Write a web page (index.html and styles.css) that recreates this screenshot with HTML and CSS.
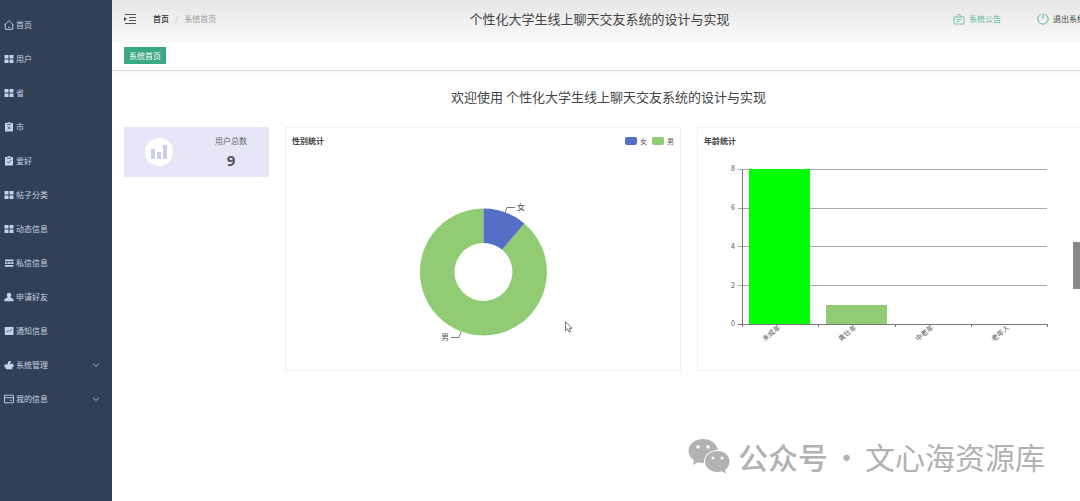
FILE: index.html
```html
<!DOCTYPE html>
<html lang="zh-CN">
<head>
<meta charset="utf-8">
<title>个性化大学生线上聊天交友系统的设计与实现</title>
<link rel="stylesheet" href="styles.css">
</head>
<body>
<svg class="defs" aria-hidden="true">
  <symbol id="grid" viewBox="0 0 10 10"><path fill="currentColor" d="M.5 1h4v3.500h-4zM5.500 1h4v3.500h-4zM.5 5.500h4V9h-4zM5.500 5.500h4V9h-4z"/></symbol>
  <symbol id="down" viewBox="0 0 8 8"><path fill="none" stroke="currentColor" stroke-width=".8" d="M1 2.500l3 3 3-3"/></symbol>
</svg>
<div class="app">
  <nav class="sidebar">
    <ul class="menu">
      <li><a class="item" href="#"><svg class="icon" viewBox="0 0 10 10"><path fill="none" stroke="currentColor" stroke-width=".9" d="M.3 5.200L5 .8l4.700 4.400M1.300 4.200V9.300h7.400V4.200M4 7.300h2"/></svg>首页</a></li>
      <li><a class="item" href="#"><svg class="icon"><use href="#grid"/></svg>用户</a></li>
      <li><a class="item" href="#"><svg class="icon"><use href="#grid"/></svg>省</a></li>
      <li><a class="item" href="#"><svg class="icon" viewBox="0 0 10 10"><path fill="currentColor" d="M1 1h2.500V.3h3V1H9v8.500H1z"/><path fill="none" stroke="#304156" stroke-width=".8" d="M3 2.300h4M3.500 4.300l3 3M6.500 4.300l-3 3"/></svg>市</a></li>
      <li><a class="item" href="#"><svg class="icon" viewBox="0 0 10 10"><path fill="currentColor" d="M1 1h2.500V.3h3V1H9v8.500H1z"/><path fill="none" stroke="#304156" stroke-width=".8" d="M3 2.300h4M3 5.500l1.500 1.500L7.300 4"/></svg>爱好</a></li>
      <li><a class="item" href="#"><svg class="icon"><use href="#grid"/></svg>帖子分类</a></li>
      <li><a class="item" href="#"><svg class="icon"><use href="#grid"/></svg>动态信息</a></li>
      <li><a class="item" href="#"><svg class="icon" viewBox="0 0 10 10"><path fill="currentColor" d="M1 1.500h8.500v1.700H1zM1 4.300h8.500V6H1zM1 7.100h8.500v1.700H1z"/><path stroke="#304156" stroke-width=".6" d="M3.300 4.300V6M6.800 4.300V6"/></svg>私信信息</a></li>
      <li><a class="item" href="#"><svg class="icon" viewBox="0 0 10 10"><path fill="currentColor" d="M5 .7a2.300 2.300 0 0 1 2.300 2.300c0 1-.5 1.800-1.100 2.200L9.500 7v2.200h-9V7l3.300-1.800C3.200 4.800 2.700 4 2.700 3A2.300 2.300 0 0 1 5 .7z"/></svg>申请好友</a></li>
      <li><a class="item" href="#"><svg class="icon" viewBox="0 0 10 10"><path fill="currentColor" d="M.8 1h8.700v8H.8z"/><path fill="none" stroke="#304156" stroke-width=".8" d="M2.500 6l1.800-1.500 1 1L8 3.300"/></svg>通知信息</a></li>
      <li><a class="item" href="#"><svg class="icon" viewBox="0 0 10 10"><path fill="currentColor" d="M.5 4.500h2.800L4 2.200C4.800.5 7 .7 7.200 2L5.800 3l.9 1.200L8.500 3v1.500h1V7H8.300v2.300H1.800V7.500H.5z"/></svg>系统管理<svg class="arrow"><use href="#down"/></svg></a></li>
      <li><a class="item" href="#"><svg class="icon" viewBox="0 0 10 10"><path fill="none" stroke="currentColor" stroke-width=".9" d="M.5 1.200h9v7.600h-9zM.5 3.700h9M6 6.300h2"/></svg>我的信息<svg class="arrow"><use href="#down"/></svg></a></li>
    </ul>
  </nav>
  <main class="main">
    <header class="header">
      <div class="left">
        <button class="toggle" aria-label="折叠菜单"><svg viewBox="0 0 12 10" width="12" height="10"><path stroke="#555" fill="none" d="M1 .5h11M5 3.500h7M5 6.500h7M1 9.500h11"/><path fill="#444" d="M0 3l3 2-3 2z"/></svg></button>
        <div class="crumbs"><a class="home" href="#">首页</a><span class="slash">/</span><span>系统首页</span></div>
      </div>
      <div class="title">个性化大学生线上聊天交友系统的设计与实现</div>
      <div class="right">
        <a class="notice" href="#"><svg viewBox="0 0 12 12" width="12" height="12"><path fill="none" stroke="currentColor" stroke-width=".8" d="M1 4h10v7H1zM3.500 4L6 1l2.500 3M3.500 6.500h5M3.500 8.500h3"/></svg>系统公告</a>
        <button class="logout"><svg viewBox="0 0 12 12" width="12" height="12"><path fill="none" stroke="#5bb795" d="M4 1.200a5.200 5.200 0 1 0 4 0M6 .5v5"/></svg>退出系统</button>
      </div>
    </header>
    <div class="tabs"><a class="tab" href="#">系统首页</a></div>
    <section class="content">
      <h1 class="welcome">欢迎使用 个性化大学生线上聊天交友系统的设计与实现</h1>
      <div class="cards">
        <div class="stat">
          <svg class="badge" viewBox="0 0 28 28"><circle cx="14" cy="14" r="14" fill="#fff"/><path fill="#cdcdec" d="M6 11h4v10H6zM12 14h4v7h-4zM18 7h4v14h-4z"/></svg>
          <div class="figures"><span class="label">用户总数</span><strong class="value">9</strong></div>
        </div>
        <div class="card">
          <div class="card-head"><h2>性别统计</h2><div class="legend"><span class="key blue"></span>女<span class="key green"></span>男</div></div>
          <svg class="chart" viewBox="0 0 394 216">
            <path fill="#91cc75" d="M238.300 69.400A63.500 63.500 0 1 1 197.500 54.500V89A29 29 0 1 0 216.100 95.800z"/>
            <path fill="#5470c6" d="M197.500 54.500A63.500 63.500 0 0 1 238.300 69.400L216.100 95.800A29 29 0 0 0 197.500 89z"/>
            <path class="leader" d="M219 59l2-5.500h8M175 178l-2 5.500h-8"/>
            <text x="231" y="56">女</text><text x="155" y="186">男</text>
          </svg>
        </div>
        <div class="card">
          <div class="card-head"><h2>年龄统计</h2></div>
          <svg class="chart" viewBox="0 0 394 216">
            <path class="line" d="M40 15.500H349M40 54.500H349M40 92.500H349M40 131.500H349"/>
            <path fill="#0f0" d="M51 15h61v155H51z"/><path fill="#91cc75" d="M128 151h61v19h-61z"/>
            <path class="axis" d="M44.500 15V173M40 170.500H349.500M120.500 170v3M197.500 170v3M273.500 170v3M349.500 170v3"/>
            <g class="ticks"><text x="37" y="17">8</text><text x="37" y="56">6</text><text x="37" y="95">4</text><text x="37" y="134">2</text><text x="37" y="172">0</text></g>
            <g class="names"><text transform="translate(75 181) rotate(-40)">未成年</text><text transform="translate(151 181) rotate(-40)">青壮年</text><text transform="translate(228 181) rotate(-40)">中老年</text><text transform="translate(304 181) rotate(-40)">老年人</text></g>
          </svg>
        </div>
      </div>
    </section>
  </main>
</div>
<div class="thumb"></div>
<svg class="cursor" viewBox="0 0 8 12"><path fill="#fff" stroke="#555" stroke-width=".8" d="M.5.800v9l2.100-1.900 1.500 3.300 1.500-.7L4.200 7.300h3z"/></svg>
<div class="watermark">
  <svg class="wechat" viewBox="0 0 42 36"><path fill="#b2b2b2" d="M15 1C7 1 .5 6.300.5 13c0 4 2.200 7 5.500 9.300L4.800 27l5.200-2.700c1.700.5 3.300.7 5 .7h1C15.500 17 22 12 30 12 28.500 5.500 22.500 1 15 1z"/><path fill="#b2b2b2" d="M29.500 13C22.500 13 17 17.500 17 23.500S22.500 34 29.500 34c1.500 0 3-.3 4.300-.7L38 35.500 37 32c2.800-2 4.500-5 4.500-8.500C41.500 17.500 36.500 13 29.500 13z"/><g fill="#fff"><circle cx="10" cy="9" r="1.800"/><circle cx="20" cy="9" r="1.800"/><circle cx="25" cy="20" r="1.500"/><circle cx="34" cy="20" r="1.500"/></g></svg>
  <span class="bold">公众号</span><span class="dot">·</span><span>文心海资源库</span>
</div>
</body>
</html>
```

FILE: styles.css
```css
* { box-sizing: border-box; }
body {
  margin: 0;
  overflow: hidden;
  background: #fff;
  color: #444;
  font: 8px/12px "Noto Sans CJK SC", sans-serif;
}
a { color: inherit; text-decoration: none; }
button { padding: 0; border: 0; background: none; color: inherit; font: inherit; }
h1, h2, ul { margin: 0; padding: 0; font-weight: 400; }
svg { flex: none; }
.defs { display: none; }
.app { display: flex; min-height: 100vh; }
.sidebar {
  flex: none;
  width: 112px;
  padding-top: 8px;
  background: #304156;
  color: #c5d3e6;
}
.menu { list-style: none; }
.item { display: flex; align-items: center; gap: 2px; height: 34px; padding: 0 12px 0 4px; }
.icon { width: 10px; height: 10px; }
.arrow { width: 8px; height: 8px; margin-left: auto; }
.main { flex: 1; min-width: 0; overflow: hidden; }
.header {
  display: grid;
  grid-template-columns: minmax(0, 1fr) auto minmax(0, 1fr);
  align-items: center;
  width: calc(100% + 5px);
  height: 43px;
  padding: 0 0 6px 2px;
  background: linear-gradient(#e6e6e6, #fafafa);
  white-space: nowrap;
}
.left { display: flex; align-items: center; gap: 17px; padding-left: 10px; }
.toggle, .toggle svg { display: block; }
.crumbs { display: flex; gap: 6px; color: #999; }
.home { color: #333; font-weight: 500; }
.slash { color: #bbb; }
.title { font-size: 13px; line-height: 20px; color: #444; }
.right { display: flex; justify-content: flex-end; gap: 36px; }
.notice, .logout { display: flex; align-items: center; gap: 4px; }
.notice { color: #5bb795; }
.tabs { height: 28px; padding: 4px 12px; border-bottom: 1px solid #dcdcdc; box-shadow: 0 1px 2px #eee; }
.tab {
  display: inline-block;
  padding: 0 5px;
  background: #3aa981;
  color: #fff;
  line-height: 17px;
}
.content { width: calc(100% + 23px); padding: 16px 10px 16px 12px; }
.welcome { margin-bottom: 20px; font-size: 13px; line-height: 20px; text-align: center; }
.cards { display: grid; grid-template-columns: 145px 1fr 1fr; align-items: start; gap: 16px; }
.stat { display: flex; align-items: center; gap: 40px; height: 50px; padding-left: 21px; background: #e6e6f6; }
.badge { width: 28px; height: 28px; }
.figures { display: flex; flex-direction: column; align-items: center; gap: 3px; width: 36px; color: #666; }
.value { color: #555; font: 700 15px/20px "Noto Sans", sans-serif; }
.card { min-width: 0; border: 1px solid #f2f2f2; }
.card-head { display: flex; align-items: center; justify-content: space-between; height: 26px; padding: 0 6px; }
.card-head h2 { font-size: 8px; font-weight: 700; }
.legend { display: flex; align-items: center; gap: 3px; color: #555; font-size: 7px; }
.key { width: 12px; height: 8px; border-radius: 2px; }
.blue { background: #5470c6; }
.green { margin-left: 2px; background: #91cc75; }
.chart { display: block; width: 100%; fill: #555; font-size: 8px; }
.leader { fill: none; stroke: #777; }
.line { stroke: #aaa; }
.axis { fill: none; stroke: #777; }
.ticks { font-size: 7px; text-anchor: end; }
.names { font-size: 7px; text-anchor: middle; }
.thumb { position: fixed; top: 242px; right: 0; width: 7px; height: 47px; background: #888; }
.cursor { position: absolute; top: 321px; left: 565px; width: 8px; height: 12px; }
.watermark {
  position: absolute;
  right: 35px;
  bottom: 25px;
  display: flex;
  align-items: center;
  color: #b2b2b2;
  font-size: 30px;
  line-height: 40px;
}
.wechat { width: 42px; height: 36px; margin-right: 8px; }
.bold { font-weight: 500; }
.dot { width: 37px; text-align: center; }
```
